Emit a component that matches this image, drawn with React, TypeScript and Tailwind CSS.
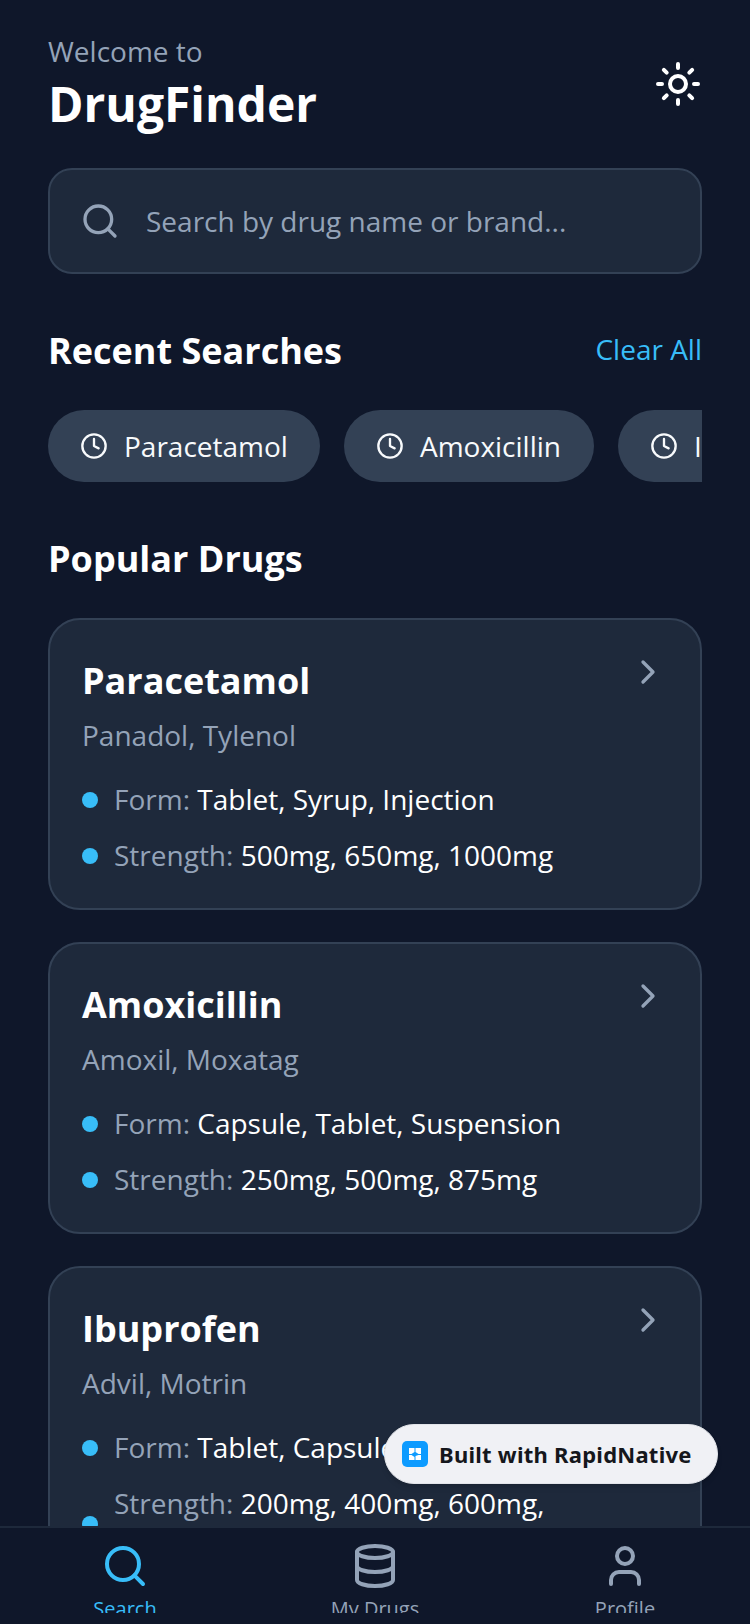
import React from "react";

const Clock = () => (
  <svg width="28" height="28" viewBox="0 0 24 24" fill="none" stroke="currentColor" strokeWidth="2" strokeLinecap="round" strokeLinejoin="round" className="shrink-0">
    <circle cx="12" cy="12" r="10" />
    <path d="M12 6v6l4 2" />
  </svg>
);

const Sun = () => (
  <svg width="48" height="48" viewBox="0 0 24 24" fill="none" stroke="currentColor" strokeWidth="2" strokeLinecap="round" strokeLinejoin="round">
    <circle cx="12" cy="12" r="4" />
    <path d="M12 2v2M12 20v2M4.93 4.93l1.41 1.41M17.66 17.66l1.41 1.41M2 12h2M20 12h2M6.34 17.66l-1.41 1.41M19.07 4.93l-1.41 1.41" />
  </svg>
);

const SearchIcon = ({ size, className, sw = 2 }: { size: number; className: string; sw?: number }) => (
  <svg width={size} height={size} viewBox="0 0 24 24" fill="none" stroke="currentColor" strokeWidth={sw} strokeLinecap="round" strokeLinejoin="round" className={className}>
    <circle cx="11" cy="11" r="8" />
    <path d="m21 21-4.3-4.3" />
  </svg>
);

const Chevron = () => (
  <svg width="40" height="40" viewBox="0 0 24 24" fill="none" stroke="currentColor" strokeWidth="2" strokeLinecap="round" strokeLinejoin="round" className="shrink-0 text-[#94a3b8]">
    <path d="m9 18 6-6-6-6" />
  </svg>
);

const Chip = ({ label }: { label: string }) => (
  <div className="flex h-[72px] min-w-[250px] shrink-0 items-center gap-4 rounded-full bg-[#334155] px-8 text-[#f8fafc]">
    <Clock />
    <span className="text-[28px] leading-[40px]">{label}</span>
  </div>
);

const Row = ({ label, value }: { label: string; value: string }) => (
  <div className="flex items-center gap-4">
    <span className="mt-[2px] h-4 w-4 shrink-0 rounded-full bg-[#38bdf8]" />
    <span className="text-[28px] leading-[40px] text-[#94a3b8]">
      {label} <span className="text-white">{value}</span>
    </span>
  </div>
);

const Card = ({ name, brands, form, strength }: { name: string; brands: string; form: string; strength: string }) => (
  <div className="flex shrink-0 items-start rounded-[32px] border-2 border-[#334155] bg-[#1e293b] px-8 pt-8 pb-[33px]">
    <div className="min-w-0 flex-1">
      <div className="mt-[1px] text-[36px] font-bold leading-[56px] text-white">{name}</div>
      <div className="mt-[2px] text-[28px] leading-[48px] text-[#94a3b8]">{brands}</div>
      <div className="mt-5 flex flex-col gap-4">
        <Row label="Form:" value={form} />
        <Row label="Strength:" value={strength} />
      </div>
    </div>
    <Chevron />
  </div>
);

export default function App() {
  return (
    <div className="relative flex h-[1624px] w-[750px] flex-col overflow-hidden bg-[#0f172a] font-['Open_Sans',sans-serif]">
      <main className="min-h-0 flex-1 overflow-hidden px-12 pt-[31px]">
        <header className="flex items-center justify-between">
          <div>
            <div className="text-[28px] leading-[40px] text-[#94a3b8]">Welcome to</div>
            <div className="mt-[1px] text-[48px] font-bold leading-[64px] text-white">DrugFinder</div>
          </div>
          <div className="text-white"><Sun /></div>
        </header>

        <div className="mt-8 flex h-[106px] items-center gap-[26px] rounded-3xl border-2 border-[#334155] bg-[#1e293b] pl-[30px] pr-8">
          <SearchIcon size={40} className="shrink-0 text-[#94a3b8]" />
          <span className="text-[28px] text-[#94a3b8]">Search by drug name or brand...</span>
        </div>

        <div className="mt-[51px] flex items-center justify-between">
          <span className="text-[36px] font-bold leading-[52px] text-white">Recent Searches</span>
          <span className="mb-1 text-[28px] leading-[40px] text-[#38bdf8]">Clear All</span>
        </div>

        <div className="mt-[33px] flex gap-6 overflow-hidden">
          <Chip label="Paracetamol" />
          <Chip label="Amoxicillin" />
          <Chip label="Ibuprofen" />
        </div>

        <div className="mt-[51px] text-[36px] font-bold leading-[52px] text-white">Popular Drugs</div>

        <div className="mt-[33px] flex flex-col gap-8">
          <Card name="Paracetamol" brands="Panadol, Tylenol" form="Tablet, Syrup, Injection" strength="500mg, 650mg, 1000mg" />
          <Card name="Amoxicillin" brands="Amoxil, Moxatag" form="Capsule, Tablet, Suspension" strength="250mg, 500mg, 875mg" />
          <Card name="Ibuprofen" brands="Advil, Motrin" form="Tablet, Capsule, Syrup" strength="200mg, 400mg, 600mg, 800mg" />
        </div>
      </main>

      <nav className="flex h-[98px] shrink-0 border-t-2 border-[#1e293b] bg-[#0f172a]">
        <div className="flex h-[85px] w-[250px] flex-col items-center overflow-hidden pt-[14px] text-[#38bdf8]">
          <SearchIcon size={48} className="shrink-0" sw={2} />
          <span className="mt-[5px] text-[20px] leading-[28px]">Search</span>
        </div>
        <div className="flex h-[85px] w-[250px] flex-col items-center overflow-hidden pt-[14px] text-[#94a3b8]">
          <svg width="48" height="48" viewBox="0 0 24 24" fill="none" stroke="currentColor" strokeWidth="2" strokeLinecap="round" strokeLinejoin="round" className="shrink-0">
            <ellipse cx="12" cy="5" rx="9" ry="3" />
            <path d="M3 5V19A9 3 0 0 0 21 19V5" />
            <path d="M3 12A9 3 0 0 0 21 12" />
          </svg>
          <span className="mt-[5px] text-[20px] leading-[28px]">My Drugs</span>
        </div>
        <div className="flex h-[85px] w-[250px] flex-col items-center overflow-hidden pt-[14px] text-[#94a3b8]">
          <svg width="48" height="48" viewBox="0 0 24 24" fill="none" stroke="currentColor" strokeWidth="2" strokeLinecap="round" strokeLinejoin="round" className="shrink-0">
            <path d="M19 21v-2a4 4 0 0 0-4-4H9a4 4 0 0 0-4 4v2" />
            <circle cx="12" cy="7" r="4" />
          </svg>
          <span className="mt-[5px] text-[20px] leading-[28px]">Profile</span>
        </div>
      </nav>

      <div className="absolute left-[384px] top-[1424px] flex h-[60px] w-[334px] items-center gap-[11px] rounded-full border border-[#e2e4e9] bg-[#f0f1f5] pl-[17px] shadow-md">
        <svg width="26" height="26" viewBox="0 0 26 26" className="shrink-0">
          <rect width="26" height="26" rx="5" fill="#0d9bff" />
          <path d="M7 7h5.5v4L9.5 13H7zM13.5 7H19v6h-2.5l-3-2zM7 14h2.5l3 2v3H7zM19 14v5h-5.5v-4l3-1z" fill="#ffffff" />
        </svg>
        <span className="font-['Noto_Sans',sans-serif] text-[22px] font-bold leading-none tracking-[0.25px] text-[#15171c]">Built with RapidNative</span>
      </div>
    </div>
  );
}
